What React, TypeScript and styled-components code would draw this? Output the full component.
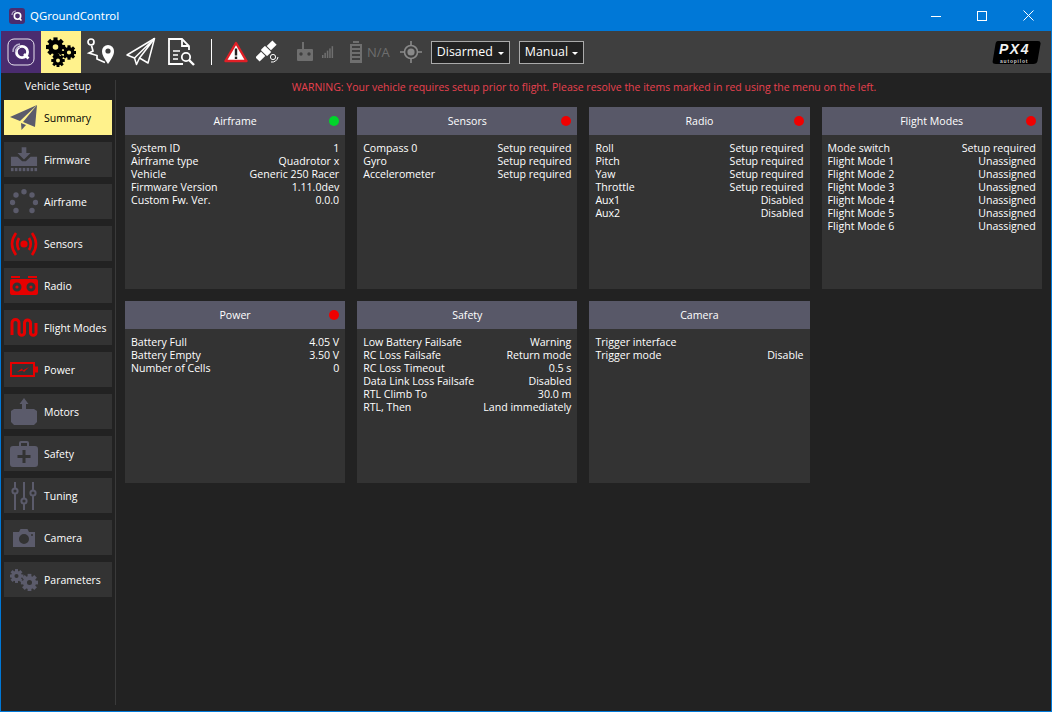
import React from "react";
import styled, { createGlobalStyle } from "styled-components";

const Global = createGlobalStyle`
  html, body { margin: 0; padding: 0; width: 1052px; height: 712px; overflow: hidden; background: #222; }
  * { box-sizing: border-box; }
`;

const Window = styled.div`
  width: 1052px; height: 712px;
  border: 1px solid #0078d7; border-top: 0;
  display: flex; flex-direction: column;
  font-family: "Open Sans", "Noto Sans", sans-serif;
  font-size: 10.6px; color: #fff; background: #222;
`;
const TitleBar = styled.div`
  height: 31px; flex: none; background: #0078d7; display: flex; align-items: center; padding-left: 8px;
`;
const TitleText = styled.span`
  font-family: "Noto Sans", sans-serif; font-size: 11.4px; margin-left: 5px; color: #fff;
`;
const WinButtons = styled.div`
  margin-left: auto; display: flex; height: 100%;
`;
const WinButton = styled.div`
  width: 46px; display: flex; align-items: center; justify-content: center;
`;
const Toolbar = styled.div`
  height: 42px; flex: none; background: #3f3f3f; display: flex; align-items: center; padding-right: 9px;
`;
const LogoCell = styled.div`
  width: 40px; height: 42px; background: #4a2c6f; display: flex; align-items: center; justify-content: center;
`;
const ToolCell = styled.div<{ $active?: boolean }>`
  width: 40px; height: 42px; display: flex; align-items: center; justify-content: center;
  background: ${(p) => (p.$active ? "#fff28c" : "transparent")};
`;
const Divider = styled.div`
  width: 1px; height: 26px; background: #fff; margin: 0 11px 0 10px;
`;
const StatusIcon = styled.div<{ $w: number; $mr?: number }>`
  width: ${(p) => p.$w}px; height: 42px; margin-right: ${(p) => p.$mr ?? 0}px;
  display: flex; align-items: center; justify-content: center;
`;
const NA = styled.span`
  color: #6e6e6e; font-size: 13px; margin: 0 10px 0 4px;
`;
const Drop = styled.div<{ $w: number }>`
  width: ${(p) => p.$w}px; height: 23px; background: #222; border: 1px solid #aaa; display: flex; align-items: center; justify-content: space-between;
  font-size: 12.4px; padding: 0 5px 2px 5px; color: #fff; margin-right: 9px; white-space: nowrap;
`;
const Caret = styled.i`
  flex: none; width: 0; height: 0; border: 3px solid transparent; border-top: 3px solid #fff; border-bottom: 0; margin-top: 4px;
`;
const Px4 = styled.div`
  margin-left: auto; display: flex;
`;
const Px4Main = styled.text`
  font-family: "Liberation Sans", sans-serif; font-weight: 700; font-style: italic; font-size: 14px; letter-spacing: 1.5px; fill: #f2f2f2;
`;
const Px4Sub = styled.text`
  font-family: "Liberation Sans", sans-serif; font-weight: 700; font-size: 5px; letter-spacing: .8px; fill: #c8c8c8;
`;
const Body = styled.div`
  flex: 1; display: flex; min-height: 0;
`;
const Sidebar = styled.div`
  width: 114px; flex: none; padding: 6px 3px 0 3px; display: flex; flex-direction: column; gap: 8px;
`;
const SideRule = styled.div`
  width: 1px; background: #3a3a3a; margin: 7px 0 6px 0; flex: none;
`;
const SideTitle = styled.div`
  text-align: center; line-height: 15px; height: 13px;
`;
const SideButtons = styled.div`
  display: flex; flex-direction: column; gap: 7px; width: 108px;
`;
const SideButton = styled.div<{ $active?: boolean }>`
  height: 35px; background: ${(p) => (p.$active ? "#fff28c" : "#333")}; color: ${(p) => (p.$active ? "#000" : "#fff")};
  display: flex; align-items: center; font-size: 10.5px;
`;
const SideIcon = styled.div`
  width: 40px; height: 35px; flex: none; display: flex; align-items: center; justify-content: center;
`;
const Content = styled.div`
  flex: 1; padding: 6px 0 0 9px; min-width: 0;
`;
const Warning = styled.div`
  color: #e8414f; font-size: 10.5px; text-align: center; line-height: 16px; height: 28px; padding-right: 8px;
`;
const Grid = styled.div`
  display: grid; grid-template-columns: repeat(4, 220.2px); grid-auto-rows: 182px; gap: 12px;
`;
const Card = styled.div`
  background: #333; display: flex; flex-direction: column;
`;
const CardHeader = styled.div`
  height: 28px; flex: none; background: #585868; position: relative; display: flex; align-items: center; justify-content: center;
`;
const Dot = styled.span<{ $color: string }>`
  position: absolute; right: 6px; top: 9px; width: 10px; height: 10px; border-radius: 50%; background: ${(p) => p.$color};
`;
const Rows = styled.div`
  padding: 7px 6px 0 6px;
`;
const Row = styled.div`
  display: flex; justify-content: space-between; height: 13px; line-height: 13px; white-space: nowrap;
`;

const G = "#5b5b6b";
const R = "#e60000";

const Gear = ({ cx, cy, r, c }: { cx: number; cy: number; r: number; c: string }) => (
  <g>
    {[0, 45, 90, 135, 180, 225, 270, 315].map((a) => (
      <rect key={a} x={cx - r * 0.26} y={cy - r * 1.2} width={r * 0.52} height={r * 0.5} fill={c} transform={`rotate(${a} ${cx} ${cy})`} />
    ))}
    <circle cx={cx} cy={cy} r={r * 0.63} fill="none" stroke={c} strokeWidth={r * 0.56} />
  </g>
);

const Gears = ({ c }: { c: string }) => (
  <svg width="30" height="30" viewBox="0 0 30 30">
    <Gear cx={9.5} cy={10} r={8} c={c} />
    <Gear cx={23} cy={15.5} r={6} c={c} />
    <Gear cx={12} cy={23.5} r={5.6} c={c} />
  </svg>
);

const ParamGears = () => (
  <svg width="28" height="22" viewBox="0 0 28 22">
    <Gear cx={6.5} cy={7} r={5.8} c={G} />
    <Gear cx={19.5} cy={13.5} r={7.2} c={G} />
  </svg>
);

const PlaneOutline = () => (
  <svg width="30" height="30" viewBox="0 0 30 30" fill="none" stroke="#fff" strokeWidth="1.5" strokeLinejoin="round">
    <path d="M1 18 L28.5 1.5 L22 26 L13.5 21 L10.5 27.5 L8.5 21 Z" />
    <path d="M28.5 1.5 L8.5 21 M28.5 1.5 L13.5 21" />
  </svg>
);

const PlaneSolid = () => (
  <svg width="30" height="28" viewBox="0 0 30 28" fill={G}>
    <path d="M1 13 L28 1 L11 17 Z" />
    <path d="M28 1 L26 23 L14 18 Z" />
    <path d="M12 19 L17 21 L12.5 26 Z" />
  </svg>
);

const Route = () => (
  <svg width="30" height="30" viewBox="0 0 30 30" fill="none" stroke="#fff" strokeWidth="1.7">
    <circle cx="5" cy="5" r="3" />
    <path d="M5.5 8.5 L7 14 L3 16 L11 18.5 L11 22 L19 25.5" />
    <path d="M22 27 C18 21 16 18 16 14 A6 6 0 0 1 28 14 C28 18 26 21 22 27 Z" fill="#fff" stroke="none" />
    <circle cx="22" cy="14" r="2.6" fill="#3f3f3f" stroke="none" />
  </svg>
);

const Analyze = () => (
  <svg width="30" height="30" viewBox="0 0 30 30" fill="none" stroke="#fff" strokeWidth="1.8">
    <path d="M17 27 H3 V2 H16 L23 9 V13" />
    <path d="M16 2 V9 H23" />
    <path d="M7 14 H14 M7 18 H12 M7 22 H12" strokeWidth="1.6" />
    <circle cx="20" cy="20" r="4.2" />
    <path d="M23 23 L28 28" strokeWidth="2.4" />
  </svg>
);

const Warn = () => (
  <svg width="24" height="22" viewBox="0 0 24 22">
    <path d="M12 2 L22.5 20 H1.5 Z" fill="#fff" stroke="#e01f26" strokeWidth="2.4" strokeLinejoin="round" />
    <rect x="10.8" y="7.5" width="2.4" height="7" fill="#222" />
    <rect x="10.8" y="15.6" width="2.4" height="2.4" fill="#222" />
  </svg>
);

const Satellite = () => (
  <svg width="24" height="24" viewBox="0 0 24 24" fill="#fff">
    <g transform="rotate(-45 10 11)">
      <rect x="-2" y="8" width="8" height="6" />
      <rect x="14" y="8" width="8" height="6" />
      <rect x="7" y="6.5" width="6" height="9" rx="1" />
    </g>
    <path d="M22 17 A6 6 0 0 1 15 22" fill="none" stroke="#fff" strokeWidth="1" />
    <circle cx="17" cy="17" r="2.6" fill="none" stroke="#fff" strokeWidth="1" />
  </svg>
);

const RcIcon = () => (
  <svg width="18" height="20" viewBox="0 0 18 20" fill="#6f6f6f">
    <rect x="6" y="0" width="2" height="8" />
    <rect x="1" y="7" width="16" height="12" rx="1" />
    <circle cx="5" cy="12" r="1.7" fill="#3f3f3f" />
    <circle cx="13" cy="12" r="1.7" fill="#3f3f3f" />
  </svg>
);

const Signal = () => (
  <svg width="12" height="12" viewBox="0 0 12 12" fill="#6f6f6f">
    {[0, 1, 2, 3, 4].map((i) => (
      <rect key={i} x={i * 2.4} y={9 - i * 2.2} width="1.5" height={3 + i * 2.2} />
    ))}
  </svg>
);

const Battery = () => (
  <svg width="14" height="22" viewBox="0 0 14 22" fill="#6f6f6f">
    <rect x="4" y="0" width="6" height="2" />
    <path fillRule="evenodd" d="M1 3 H13 V22 H1 Z M3 5 V7 H11 V5 Z M3 9 V11 H11 V9 Z M3 13 V15 H11 V13 Z M3 17 V19 H11 V17 Z" />
  </svg>
);

const Target = () => (
  <svg width="22" height="22" viewBox="0 0 22 22" fill="none" stroke="#8a8a8a">
    <circle cx="11" cy="11" r="6.5" strokeWidth="1.6" />
    <circle cx="11" cy="11" r="3.6" fill="#8a8a8a" stroke="none" />
    <path d="M11 0 V4.5 M11 17.5 V22 M0 11 H4.5 M17.5 11 H22" strokeWidth="1.6" />
  </svg>
);

const QLogo = () => (
  <svg width="28" height="28" viewBox="0 0 28 28" fill="none">
    <rect x="1" y="1" width="26" height="26" rx="6" stroke="#e8e4ee" strokeWidth="1" />
    <circle cx="15" cy="14" r="5.6" stroke="#fff" strokeWidth="2.8" />
    <path d="M17 16 L21.5 20.5" stroke="#fff" strokeWidth="2.6" />
    <path d="M6 14 A7.5 7.5 0 0 1 13 6 M8.5 14.5 A5 5 0 0 1 13 9" stroke="#b5abc9" strokeWidth="1.5" />
  </svg>
);

const Firmware = () => (
  <svg width="28" height="25" viewBox="0 0 30 26" fill={G}>
    <path d="M12.5 0 H17.5 V6 H22 L15 13 L8 6 H12.5 Z" />
    <path d="M1 10 H8 L13 15 H17 L22 10 H29 V20 H1 Z" />
    {[1, 5.2, 9.4, 13.6, 17.8, 22, 26.2].map((x) => (
      <rect key={x} x={x} y="22" width="2.8" height="3.5" />
    ))}
  </svg>
);

const AirframeIcon = () => (
  <svg width="28" height="26" viewBox="0 0 28 26" fill={G}>
    {[[14, 2.8], [22, 6], [25.5, 13.5], [22, 21.5], [6, 21.5], [2.5, 13.5], [6, 6]].map(([x, y]) => (
      <circle key={`${x}-${y}`} cx={x} cy={y} r="2.7" />
    ))}
  </svg>
);

const SensorsIcon = () => (
  <svg width="28" height="26" viewBox="0 0 28 26" fill="none" stroke={R} strokeWidth="2.6">
    <circle cx="14" cy="13" r="3.6" fill={R} stroke="none" />
    <path d="M9 7 Q5.5 13 9 19 M19 7 Q22.5 13 19 19" />
    <path d="M6 2 Q-2 13 6 24 M22 2 Q30 13 22 24" />
  </svg>
);

const RadioIcon = () => (
  <svg width="28" height="19" viewBox="0 0 28 19" fill={R}>
    <rect x="1" y="0" width="9" height="2" />
    <rect x="18" y="0" width="9" height="2" />
    <path fillRule="evenodd" d="M2 3 H26 Q28 3 28 5 V17 Q28 19 26 19 H2 Q0 19 0 17 V5 Q0 3 2 3 Z M7 6.5 A4.5 4.5 0 1 0 7 15.5 A4.5 4.5 0 1 0 7 6.5 Z M21 6.5 A4.5 4.5 0 1 0 21 15.5 A4.5 4.5 0 1 0 21 6.5 Z" />
    <circle cx="7" cy="11" r="1.6" />
    <circle cx="21" cy="11" r="1.6" />
  </svg>
);

const ModesIcon = () => (
  <svg width="28" height="22" viewBox="0 0 28 22" fill="none" stroke={R} strokeWidth="3">
    <path d="M2 18 V6 A3.5 3.5 0 0 1 9 6 V16 A2.8 2.8 0 0 0 14.5 16 V6 A3 3 0 0 1 20.5 6 V16 A2.8 2.8 0 0 0 26 16 V6" />
  </svg>
);

const PowerIcon = () => (
  <svg width="28" height="15" viewBox="0 0 28 15" fill="none">
    <rect x="1" y="1" width="23" height="13" stroke={R} strokeWidth="2" />
    <rect x="25" y="4.5" width="3" height="6" fill={R} />
    <path d="M7 10 L12 6.5 L13 8.5 L19 5 L14 10 L12.5 8.5 Z" fill={R} />
  </svg>
);

const MotorsIcon = () => (
  <svg width="26" height="28" viewBox="0 0 26 28" fill={G}>
    <path d="M13 0 L17.5 6 H15 V11 H11 V6 H8.5 Z" />
    <path d="M3 11 H23 L26 13 V24 L23 27 H3 L0 24 V13 Z" />
  </svg>
);

const SafetyIcon = () => (
  <svg width="28" height="26" viewBox="0 0 28 26" fill={G}>
    <path fillRule="evenodd" d="M9 5 V2 Q9 0 11 0 H17 Q19 0 19 2 V5 H25 Q28 5 28 8 V23 Q28 26 25 26 H3 Q0 26 0 23 V8 Q0 5 3 5 Z M11 5 H17 V2 H11 Z M12.5 9 V14 H7.5 V17 H12.5 V22 H15.5 V17 H20.5 V14 H15.5 V9 Z" />
  </svg>
);

const TuningIcon = () => (
  <svg width="26" height="28" viewBox="0 0 26 28" fill="none" stroke={G} strokeWidth="2">
    <path d="M4 0 V6 M4 12 V28 M13 0 V16 M13 22 V28 M22 0 V8 M22 14 V28" />
    <circle cx="4" cy="9" r="2.6" />
    <circle cx="13" cy="19" r="2.6" />
    <circle cx="22" cy="11" r="2.6" />
  </svg>
);

const CameraIcon = () => (
  <svg width="24" height="20" viewBox="0 0 24 20" fill={G}>
    <path fillRule="evenodd" d="M1 4 H7 L8.5 1 H15.5 L17 4 H23 V19 H1 Z M12 6 A5 5 0 1 0 12 16 A5 5 0 1 0 12 6 Z M20 6 A1 1 0 1 0 20 8 A1 1 0 1 0 20 6 Z" />
  </svg>
);

const Px4Logo = () => (
  <svg width="50" height="25" viewBox="0 0 50 25">
    <path d="M6 1 H46 Q49 1 48.5 4 L45.5 21 Q45 24 41 24 H4 Q0 24 .7 21 L3.5 4 Q4 1 6 1 Z" fill="#000" />
    <Px4Main x="7" y="14">PX4</Px4Main>
    <Px4Sub x="8" y="22.5">autopilot</Px4Sub>
  </svg>
);

const sideItems: [string, React.ReactNode][] = [
  ["Summary", <PlaneSolid />],
  ["Firmware", <Firmware />],
  ["Airframe", <AirframeIcon />],
  ["Sensors", <SensorsIcon />],
  ["Radio", <RadioIcon />],
  ["Flight Modes", <ModesIcon />],
  ["Power", <PowerIcon />],
  ["Motors", <MotorsIcon />],
  ["Safety", <SafetyIcon />],
  ["Tuning", <TuningIcon />],
  ["Camera", <CameraIcon />],
  ["Parameters", <ParamGears />],
];

const GREEN = "#00d42a";
const RED = "#f00000";
type CardData = { title: string; dot?: string; rows: [string, string][] };
const cards: CardData[] = [
  { title: "Airframe", dot: GREEN, rows: [["System ID", "1"], ["Airframe type", "Quadrotor x"], ["Vehicle", "Generic 250 Racer"], ["Firmware Version", "1.11.0dev"], ["Custom Fw. Ver.", "0.0.0"]] },
  { title: "Sensors", dot: RED, rows: [["Compass 0", "Setup required"], ["Gyro", "Setup required"], ["Accelerometer", "Setup required"]] },
  { title: "Radio", dot: RED, rows: [["Roll", "Setup required"], ["Pitch", "Setup required"], ["Yaw", "Setup required"], ["Throttle", "Setup required"], ["Aux1", "Disabled"], ["Aux2", "Disabled"]] },
  { title: "Flight Modes", dot: RED, rows: [["Mode switch", "Setup required"], ["Flight Mode 1", "Unassigned"], ["Flight Mode 2", "Unassigned"], ["Flight Mode 3", "Unassigned"], ["Flight Mode 4", "Unassigned"], ["Flight Mode 5", "Unassigned"], ["Flight Mode 6", "Unassigned"]] },
  { title: "Power", dot: RED, rows: [["Battery Full", "4.05 V"], ["Battery Empty", "3.50 V"], ["Number of Cells", "0"]] },
  { title: "Safety", rows: [["Low Battery Failsafe", "Warning"], ["RC Loss Failsafe", "Return mode"], ["RC Loss Timeout", "0.5 s"], ["Data Link Loss Failsafe", "Disabled"], ["RTL Climb To", "30.0 m"], ["RTL, Then", "Land immediately"]] },
  { title: "Camera", rows: [["Trigger interface", ""], ["Trigger mode", "Disable"]] },
];

export default function App() {
  return (
    <Window>
      <Global />
      <TitleBar>
        <svg width="16" height="16" viewBox="0 0 16 16" fill="none">
          <rect width="16" height="16" rx="3" fill="#4a2c6f" />
          <circle cx="8.5" cy="8" r="3.2" stroke="#fff" strokeWidth="1.6" />
          <path d="M10 10 L12.5 12.5" stroke="#fff" strokeWidth="1.5" />
          <path d="M3 7 A4 4 0 0 1 7 3" stroke="#b5abc9" strokeWidth="1.2" />
        </svg>
        <TitleText>QGroundControl</TitleText>
        <WinButtons>
          <WinButton>
            <svg width="10" height="10" viewBox="0 0 10 10"><path d="M0 5.5 H10" stroke="#fff" /></svg>
          </WinButton>
          <WinButton>
            <svg width="10" height="10" viewBox="0 0 10 10"><rect x=".5" y=".5" width="9" height="9" fill="none" stroke="#fff" /></svg>
          </WinButton>
          <WinButton>
            <svg width="11" height="11" viewBox="0 0 11 11"><path d="M.5 .5 L10.5 10.5 M10.5 .5 L.5 10.5" stroke="#fff" /></svg>
          </WinButton>
        </WinButtons>
      </TitleBar>
      <Toolbar>
        <LogoCell><QLogo /></LogoCell>
        <ToolCell $active><Gears c="#000" /></ToolCell>
        <ToolCell><Route /></ToolCell>
        <ToolCell><PlaneOutline /></ToolCell>
        <ToolCell><Analyze /></ToolCell>
        <Divider />
        <StatusIcon $w={26} $mr={7}><Warn /></StatusIcon>
        <StatusIcon $w={24} $mr={16}><Satellite /></StatusIcon>
        <StatusIcon $w={18} $mr={8}><RcIcon /></StatusIcon>
        <StatusIcon $w={12} $mr={15}><Signal /></StatusIcon>
        <Battery />
        <NA>N/A</NA>
        <StatusIcon $w={22} $mr={9}><Target /></StatusIcon>
        <Drop $w={79}>Disarmed<Caret /></Drop>
        <Drop $w={65}>Manual<Caret /></Drop>
        <Px4><Px4Logo /></Px4>
      </Toolbar>
      <Body>
        <Sidebar>
          <SideTitle>Vehicle Setup</SideTitle>
          <SideButtons>
            {sideItems.map(([label, icon], i) => (
              <SideButton key={label} $active={i === 0}>
                <SideIcon>{icon}</SideIcon>
                {label}
              </SideButton>
            ))}
          </SideButtons>
        </Sidebar>
        <SideRule />
        <Content>
          <Warning>WARNING: Your vehicle requires setup prior to flight. Please resolve the items marked in red using the menu on the left.</Warning>
          <Grid>
            {cards.map((c) => (
              <Card key={c.title}>
                <CardHeader>
                  {c.title}
                  {c.dot && <Dot $color={c.dot} />}
                </CardHeader>
                <Rows>
                  {c.rows.map(([k, v]) => (
                    <Row key={k}><span>{k}</span><span>{v}</span></Row>
                  ))}
                </Rows>
              </Card>
            ))}
          </Grid>
        </Content>
      </Body>
    </Window>
  );
}
